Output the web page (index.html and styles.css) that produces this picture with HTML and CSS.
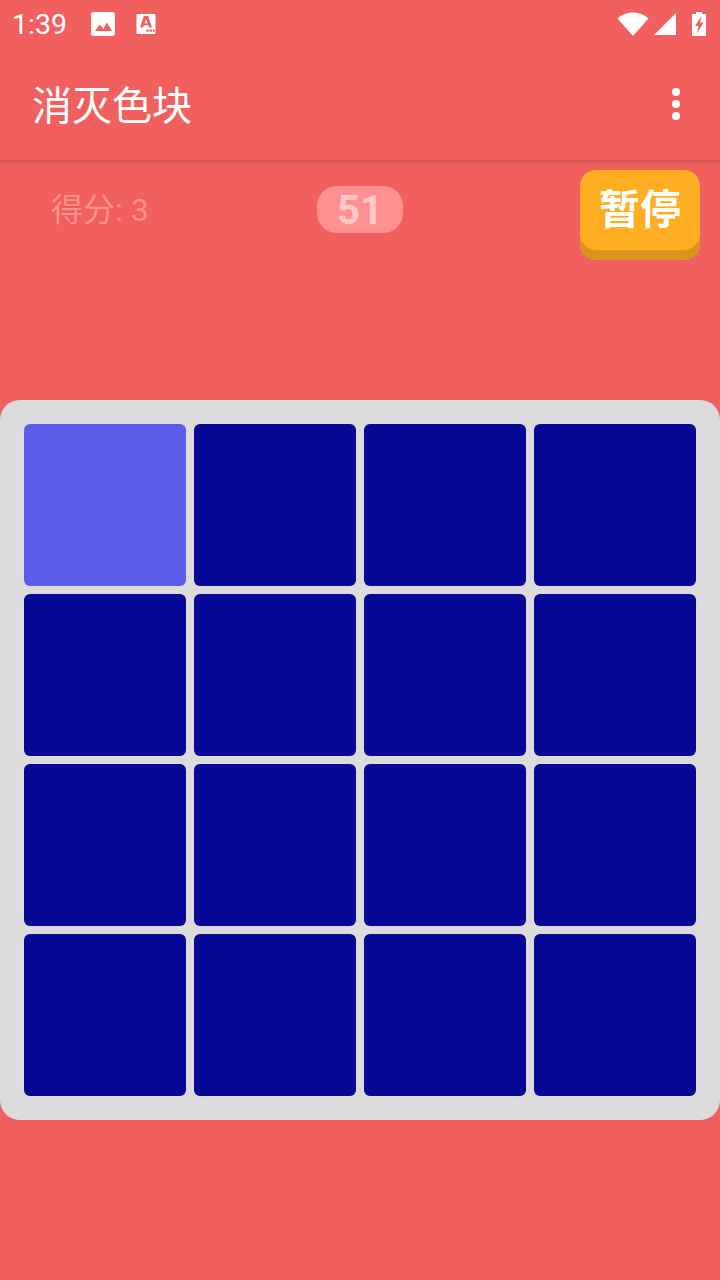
FILE: index.html
```html
<!DOCTYPE html>
<html lang="zh">
<head>
<meta charset="utf-8">
<title>消灭色块</title>
<link rel="stylesheet" href="styles.css">
</head>
<body>
<div class="app">
  <header class="appbar">
    <div class="status">
      <span class="clock">1:39</span>
      <svg class="ic-image" viewBox="0 0 24 24"><path d="M3.500 1h17A2.500 2.500 0 0 1 23 3.500v17a2.500 2.500 0 0 1-2.500 2.500h-17A2.500 2.500 0 0 1 1 20.500v-17A2.500 2.500 0 0 1 3.500 1z" fill="#fff"/><path d="M4.500 18.500l4.500-6 3.200 4 3.300-6 5 8z" fill="#f15f5f"/></svg>
      <svg class="ic-a" viewBox="0 0 20 22"><path d="M1.500 1h17a1 1 0 0 1 1 1v18a1 1 0 0 1-1 1h-17a1 1 0 0 1-1-1V2a1 1 0 0 1 1-1z" fill="#fff"/><path d="M7.800 3h4.400l3.800 11.500h-3l-.7-2.200H7.700L7 14.500H4zM10 6.500l-1.500 3.800h3z" fill="#f15f5f" fill-rule="evenodd"/><path d="M10.500 16.500h2.200v2.200h-2.200zM13.700 16.500h2.200v2.200h-2.200zM16.800 16.500h1.800v2.200h-1.800z" fill="#f15f5f"/></svg>
      <span class="spacer"></span>
      <svg class="ic-wifi" viewBox="0 0 32 24"><path d="M16 24 .5 6.500C4.500 2.800 10 .5 16 .5s11.500 2.300 15.500 6z" fill="#fff"/></svg>
      <svg class="ic-signal" viewBox="0 0 22 22"><path d="M22 0v22H0z" fill="#fff"/></svg>
      <svg class="ic-battery" viewBox="0 0 14 24"><path d="M4 0h6v2h4v22H0V2h4z" fill="#fff"/><path d="M9.500 4 3 14h3.500L5 21.500 11.500 10.500H8z" fill="#f15f5f"/></svg>
    </div>
    <div class="toolbar">
      <span class="title">消灭色块</span>
      <div class="menu"><i></i><i></i><i></i></div>
    </div>
  </header>
  <section class="scorebar">
    <span class="score">得分: 3</span>
    <span class="timer">51</span>
    <button class="pause">暂停</button>
  </section>
  <main class="board">
    <div class="cell lit"></div><div class="cell"></div><div class="cell"></div><div class="cell"></div>
    <div class="cell"></div><div class="cell"></div><div class="cell"></div><div class="cell"></div>
    <div class="cell"></div><div class="cell"></div><div class="cell"></div><div class="cell"></div>
    <div class="cell"></div><div class="cell"></div><div class="cell"></div><div class="cell"></div>
  </main>
</div>
</body>
</html>
```
FILE: styles.css
```css
* { box-sizing: border-box; }
html, body { margin: 0; padding: 0; }
body { width: 720px; height: 1280px; overflow: hidden; background: #f15f5f; font-family: Roboto, "Noto Sans CJK SC", sans-serif; }
.app { display: flex; flex-direction: column; height: 1280px; }
.appbar { height: 160px; background: #f15f5f; box-shadow: 0 1px 4px rgba(0,0,0,.22); position: relative; }
.status { height: 48px; display: flex; align-items: center; padding: 0 14px 0 12px; color: #fff; }
.clock { font-size: 28.5px; width: 66px; line-height: 50px; height: 48px; }
.ic-image { width: 26px; height: 26px; margin-left: 12px; }
.ic-a { width: 20px; height: 22px; margin-left: 20px; }
.spacer { flex: 1; }
.ic-wifi { width: 32px; height: 24px; margin-right: 5px; }
.ic-signal { width: 22px; height: 22px; margin-right: 16px; }
.ic-battery { width: 14px; height: 24px; }
.toolbar { height: 112px; display: flex; align-items: center; justify-content: space-between; padding: 0 40px 0 32px; color: #fff; }
.title { font-size: 40px; line-height: 118px; height: 112px; }
.menu { display: flex; flex-direction: column; gap: 4px; }
.menu i { display: block; width: 8px; height: 8px; border-radius: 50%; background: #fff; }
.scorebar { height: 240px; position: relative; display: flex; justify-content: center; padding-top: 26px; }
.score { position: absolute; left: 51px; top: 30px; font-size: 32px; line-height: 40px; color: #ff9090; }
.timer { height: 47px; width: 86px; border-radius: 20px; background: #ff9090; color: #ffc8c8; font-size: 40px; font-weight: 700; line-height: 49px; text-align: center; }
.pause { position: absolute; left: 580px; top: 10px; width: 120px; height: 90px; padding: 0 0 10px; border: 0; border-radius: 16px; background: #ffad21; box-shadow: inset 0 -10px 0 #d99420; color: #fff; font: 700 41px/78px Roboto, "Noto Sans CJK SC", sans-serif; }
.board { width: 720px; height: 720px; padding: 24px; background: #dcdcdc; border-radius: 20px; display: grid; grid-template-columns: repeat(4, 162px); grid-template-rows: repeat(4, 162px); gap: 8px; }
.cell { background: #080896; border-radius: 6px; }
.cell.lit { background: #5a5eea; }
```
